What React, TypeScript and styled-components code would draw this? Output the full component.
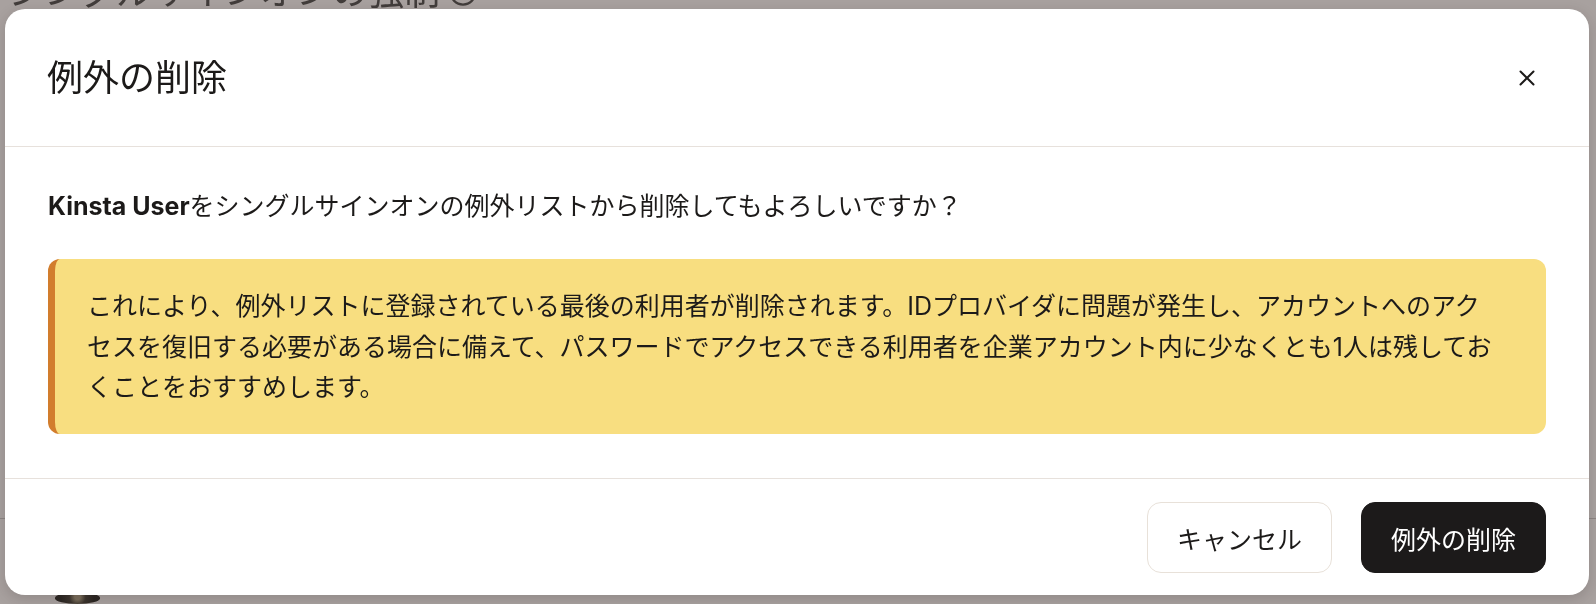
import React from "react";
import styled, { createGlobalStyle } from "styled-components";
import { CircleHelp } from "lucide-react";

const GlobalStyle = createGlobalStyle`
  html, body {
    margin: 0;
    padding: 0;
    width: 100%;
    height: 100%;
    overflow: hidden;
  }
  body {
    font-family: Inter, "Noto Sans CJK JP", sans-serif;
    background: #a8a19f;
    color: #1d1b1a;
  }
  * {
    box-sizing: border-box;
  }
`;

// page that sits under the dimmed overlay
const BackPage = styled.div`
  position: fixed;
  inset: 0;
  overflow: hidden;
  display: flex;
  flex-direction: column;
  padding-left: 8px;
`;

const BackHeading = styled.h2`
  display: flex;
  align-items: center;
  gap: 8px;
  margin: -26px 0 0;
  font-size: 36px;
  font-weight: 400;
  line-height: 36px;
  color: #423d3b;
`;

const BackRule = styled.div`
  height: 1px;
  margin: 508px 0 0 -8px;
  background: #8c8583;
`;

const BackAvatar = styled.div`
  width: 45px;
  height: 45px;
  margin: 74px 0 0 47px;
  border-radius: 50%;
  background: radial-gradient(circle at 50% 40%, #7a6e5c 0 12%, #3b342d 35%, #2b2622 70%);
`;

const Overlay = styled.div`
  position: fixed;
  inset: 0;
  display: flex;
  align-items: flex-start;
  padding: 9px 0 0 5px;
`;

const Modal = styled.div`
  width: 1584px;
  display: flex;
  flex-direction: column;
  background: #ffffff;
  border-radius: 20px;
  box-shadow: 0 4px 14px rgba(40, 30, 25, 0.18);
  overflow: hidden;
`;

const Header = styled.div`
  height: 138px;
  display: flex;
  align-items: center;
  justify-content: space-between;
  padding: 0 43px 0 42px;
  border-bottom: 1px solid #e7e1dc;
`;

const Title = styled.h1`
  margin: 0;
  font-size: 36px;
  font-weight: 400;
  line-height: 1;
  color: #1c1a19;
`;

const CloseButton = styled.button`
  width: 38px;
  height: 38px;
  padding: 0;
  border: none;
  background: transparent;
  display: flex;
  align-items: center;
  justify-content: center;
  color: #1c1a19;
  cursor: pointer;
`;

const Body = styled.div`
  height: 332px;
  padding: 39px 43px 0;
  border-bottom: 1px solid #e7e1dc;
`;

const Question = styled.p`
  margin: 0 0 33px;
  font-size: 25px;
  line-height: 40px;
  color: #1c1a19;

  strong {
    font-weight: 700;
  }
`;

const Notice = styled.div`
  border-left: 7px solid #d27d2d;
  border-radius: 12px;
  background: #f8de80;
  padding: 27px 39px 26px 32px;
  font-size: 25px;
  line-height: 40.6px;
  color: #1c1a19;
`;

const Footer = styled.div`
  display: flex;
  justify-content: flex-end;
  gap: 29px;
  padding: 23px 43px 22px;
`;

const Button = styled.button<{ $primary?: boolean }>`
  height: 71px;
  padding: 0 29px;
  border-radius: 14px;
  font-family: inherit;
  font-size: 25px;
  font-weight: 400;
  cursor: pointer;
  border: 1.5px solid ${({ $primary }) => ($primary ? "#1c1a1a" : "#e8e1d9")};
  background: ${({ $primary }) => ($primary ? "#1c1a1a" : "#ffffff")};
  color: ${({ $primary }) => ($primary ? "#ffffff" : "#1c1a19")};
`;

const CloseIcon = () => (
  <svg width="16" height="16" viewBox="0 0 16 16" fill="none">
    <path d="M1.5 1.5l13 13M14.5 1.5l-13 13" stroke="currentColor" strokeWidth="2" strokeLinecap="round" />
  </svg>
);

export default function App() {
  return (
    <>
      <GlobalStyle />
      <BackPage>
        <BackHeading>
          シングルサインオンの強制
          <CircleHelp size={30} strokeWidth={1.8} />
        </BackHeading>
        <BackRule />
        <BackAvatar />
      </BackPage>
      <Overlay>
        <Modal role="dialog">
          <Header>
            <Title>例外の削除</Title>
            <CloseButton aria-label="閉じる">
              <CloseIcon />
            </CloseButton>
          </Header>
          <Body>
            <Question>
              <strong>Kinsta User</strong>をシングルサインオンの例外リストから削除してもよろしいですか？
            </Question>
            <Notice>
              これにより、例外リストに登録されている最後の利用者が削除されます。IDプロバイダに問題が発生し、アカウントへのアク
              <br />
              セスを復旧する必要がある場合に備えて、パスワードでアクセスできる利用者を企業アカウント内に少なくとも1人は残してお
              <br />
              くことをおすすめします。
            </Notice>
          </Body>
          <Footer>
            <Button>キャンセル</Button>
            <Button $primary>例外の削除</Button>
          </Footer>
        </Modal>
      </Overlay>
    </>
  );
}
